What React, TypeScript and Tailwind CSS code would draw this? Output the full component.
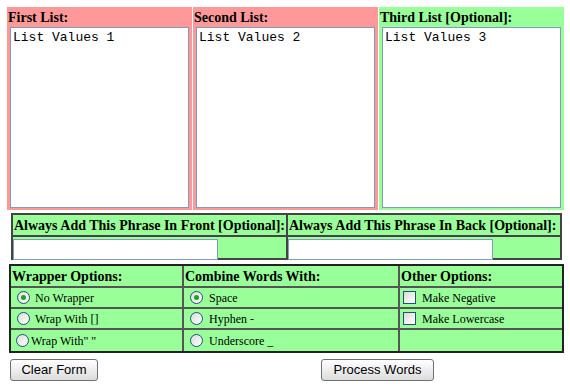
import { useState } from 'react'

const SERIF = { fontFamily: '"Liberation Serif", "Times New Roman", serif' }
const MONO = { fontFamily: '"Liberation Mono", "Courier New", monospace' }
const SANS = { fontFamily: '"Liberation Sans", Arial, sans-serif' }

function ListColumn({ title, value, tone }: { title: string; value: string; tone: string }) {
  return (
    <div className={`flex h-[203px] w-[185px] flex-col px-[3px] pb-[2px] ${tone}`}>
      <div className="h-[20px] pt-[2px] -ml-[2px] text-[14px] font-bold leading-[17px] text-black" style={SERIF}>
        {title}
      </div>
      <textarea
        defaultValue={value}
        className="flex-1 resize-none border border-[#7f9db9] bg-white px-[2px] py-[2px] text-[13px] leading-[15px] text-black outline-none"
        style={MONO}
      />
    </div>
  )
}

function Radio({ checked }: { checked?: boolean }) {
  return (
    <span className="flex h-[13px] w-[13px] items-center justify-center rounded-full border border-[#1c5180] bg-gradient-to-br from-[#dcdcd7] to-white">
      {checked && <span className="h-[5px] w-[5px] rounded-full bg-[#21a121]" />}
    </span>
  )
}

function Box() {
  return <span className="h-[13px] w-[13px] border border-[#1c5180] bg-gradient-to-br from-[#dcdcd7] to-white" />
}

export default function App() {
  const [wrap, setWrap] = useState('none')
  const [join, setJoin] = useState('space')

  const wrapOpts = [
    { id: 'none', label: 'No Wrapper' },
    { id: 'brackets', label: 'Wrap With []' },
    { id: 'quotes', label: 'Wrap With" "' },
  ]
  const joinOpts = [
    { id: 'space', label: 'Space' },
    { id: 'hyphen', label: 'Hyphen -' },
    { id: 'underscore', label: 'Underscore _' },
  ]
  const otherOpts = ['Make Negative', 'Make Lowercase', '']

  return (
    <div className="h-[390px] w-[570px] bg-white" style={SERIF}>
      <div className="flex gap-[1px] px-[7px] pt-[7px]">
        <ListColumn title="First List:" value="List Values 1" tone="bg-[#ff9999]" />
        <ListColumn title="Second List:" value="List Values 2" tone="bg-[#ff9999]" />
        <ListColumn title="Third List [Optional]:" value="List Values 3" tone="bg-[#99ff99]" />
      </div>

      <div className="ml-[11px] mt-[3px] w-[551px] border-2 border-[#444] bg-[#99ff99]">
        <div className="grid grid-cols-[275px_1fr]">
          {['Always Add This Phrase In Front [Optional]:', 'Always Add This Phrase In Back [Optional]:'].map((t, i) => (
            <div key={t} className={`flex flex-col ${i === 0 ? 'border-r-2 border-[#444]' : ''}`}>
              <div className="h-[22px] border-b-2 border-[#444] pl-[1px] pt-[2px] text-[14px] font-bold leading-[17px] whitespace-nowrap">
                {t}
              </div>
              <div className="h-[21px]">
                <input className="h-[21px] w-[205px] border border-[#7f9db9] bg-white outline-none" />
              </div>
            </div>
          ))}
        </div>
      </div>

      <div className="ml-[9px] mt-[4px] grid w-[555px] grid-cols-[173px_216px_1fr] border-2 border-[#222] bg-[#99ff99] text-[12px]">
        <div className="h-[22px] border-b-2 border-r-2 border-[#555] pl-[1px] pt-[2px] text-[14px] font-bold leading-[17px]">Wrapper Options:</div>
        <div className="h-[22px] border-b-2 border-r-2 border-[#555] pl-[1px] pt-[2px] text-[14px] font-bold leading-[17px]">Combine Words With:</div>
        <div className="h-[22px] border-b-2 border-[#555] pl-[1px] pt-[2px] text-[14px] font-bold leading-[17px]">Other Options:</div>
        {[0, 1, 2].map((r) => (
          <div key={r} className="contents">
            <label
              className={`flex h-[21px] items-center gap-[4px] border-r-2 border-[#555] ${r < 2 ? 'border-b-2' : ''} ${r === 2 ? 'pl-[5px]' : 'pl-[6px]'}`}
              onClick={() => setWrap(wrapOpts[r].id)}
            >
              <Radio checked={wrap === wrapOpts[r].id} />
              <span className={r === 2 ? 'ml-[-2px]' : 'ml-[1px]'}>{wrapOpts[r].label}</span>
            </label>
            <label
              className={`flex h-[21px] items-center gap-[6px] border-r-2 border-[#555] pl-[6px] ${r < 2 ? 'border-b-2' : ''}`}
              onClick={() => setJoin(joinOpts[r].id)}
            >
              <Radio checked={join === joinOpts[r].id} />
              <span>{joinOpts[r].label}</span>
            </label>
            <label className={`flex h-[21px] items-center gap-[6px] border-[#555] pl-[3px] ${r < 2 ? 'border-b-2' : ''}`}>
              {otherOpts[r] && <Box />}
              <span>{otherOpts[r]}</span>
            </label>
          </div>
        ))}
      </div>

      <div className="mt-[6px] flex pl-[10px]" style={SANS}>
        <button className="h-[22px] w-[88px] rounded-[3px] border border-[#707070] bg-gradient-to-b from-white to-[#dcdcdc] text-[13px] text-black">
          Clear Form
        </button>
        <button className="ml-[223px] h-[22px] w-[113px] rounded-[3px] border border-[#707070] bg-gradient-to-b from-white to-[#dcdcdc] text-[13px] text-black">
          Process Words
        </button>
      </div>
    </div>
  )
}
